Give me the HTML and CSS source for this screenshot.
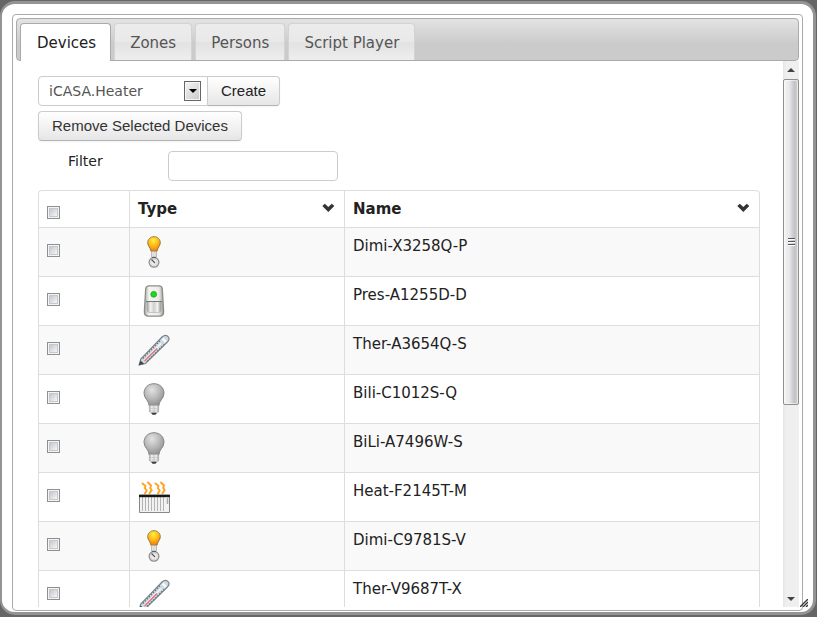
FILE: index.html
```html
<!DOCTYPE html>
<html lang="en">
<head>
<meta charset="utf-8">
<title>Devices</title>
<link rel="stylesheet" href="styles.css">
</head>
<body>
<svg class="defs" width="0" height="0" aria-hidden="true">
  <defs>
    <radialGradient id="glow" cx="45%" cy="25%" r="75%"><stop offset="0" stop-color="#ffec45"/><stop offset=".45" stop-color="#ffc21a"/><stop offset="1" stop-color="#f27a08"/></radialGradient>
    <radialGradient id="dull" cx="40%" cy="28%" r="70%"><stop offset="0" stop-color="#e2e2e2"/><stop offset=".55" stop-color="#b9b9b9"/><stop offset="1" stop-color="#929292"/></radialGradient>
    <linearGradient id="metal"><stop offset="0" stop-color="#a2a2a2"/><stop offset=".25" stop-color="#f2f2f2"/><stop offset=".5" stop-color="#cfcfcf"/><stop offset=".75" stop-color="#f2f2f2"/><stop offset="1" stop-color="#999"/></linearGradient>
    <linearGradient id="shell"><stop offset="0" stop-color="#a9a9a4"/><stop offset=".25" stop-color="#f5f5f1"/><stop offset=".75" stop-color="#ecece8"/><stop offset="1" stop-color="#999994"/></linearGradient>
    <symbol id="dimmer" viewBox="0 0 32 32">
      <path d="M16 .7c-3.700 0-6.300 2.700-6.300 6 0 3.300 2.600 4.500 3.300 8.600h6c.7-4.100 3.300-5.300 3.300-8.600 0-3.300-2.600-6-6.300-6z" fill="url(#glow)" stroke="#8a7440" stroke-width=".9"/>
      <rect x="13.500" y="15.500" width="5" height="5.500" fill="url(#metal)" stroke="#aaa" stroke-width=".5"/>
      <circle cx="16" cy="26.300" r="4.900" fill="#eee" stroke="#8b8b8b" stroke-width="1.200"/>
      <circle cx="16" cy="26.300" r="3.300" fill="none" stroke="#ccc" stroke-width=".7"/>
      <path d="M13.500 23.500l3.500 3.500" stroke="#555" stroke-width="1.100"/>
      <path d="M14 21.700h4" stroke="#555"/>
    </symbol>
    <symbol id="sensor" viewBox="0 0 32 32">
      <path d="M11 .8h10c2 0 3 1 3.300 3L25.600 26c.2 3.500-1 5.200-4 5.200H10.400c-3 0-4.200-1.700-4-5.200L7.700 3.800C8 1.800 9 .8 11 .8z" fill="url(#shell)" stroke="#8d8d88" stroke-width="1.300"/>
      <path d="M9 16.500h14v8c0 2-1 3-3 3h-8c-2 0-3-1-3-3z" fill="url(#metal)" stroke="#aaa" stroke-width=".6"/>
      <path d="M8 16.500h16" stroke="#777"/>
      <circle cx="15.700" cy="9.300" r="2.900" fill="#16dc1c" stroke="#2b8f2c" stroke-width=".7"/>
    </symbol>
    <symbol id="thermometer" viewBox="0 0 32 32">
      <path d="M1.200 31l1.600-6L24.300 2.800c4-3.800 9 1 5.300 5L7.500 29.500z" fill="#cfd9e0" stroke="#78838b" stroke-width="1.200"/>
      <path d="M24.500 4.500l3.500 3.500" stroke="#f5f9fb" stroke-width="2.500"/>
      <path d="M5 24.500L22 6.800M9 27.500L26 10.500" stroke="#6a727a" stroke-width="1.300" stroke-dasharray="1.300 1.600"/>
      <path d="M6.500 26.500L23 9.500" stroke="#f3f5f6" stroke-width="1.600"/>
      <path d="M6.500 27L19 14.500" stroke="#e5666b" stroke-width="1.100"/>
      <path d="M.8 31.200l1.700-4.700 3.700 3.300z" fill="#44484a"/>
    </symbol>
    <symbol id="bulb" viewBox="0 0 32 32">
      <path d="M16 .7C10 .7 6 5 6 10.200c0 5.500 4.700 6.800 5.300 12.800h9.400c.6-6 5.300-7.300 5.300-12.800C26 5 22 .7 16 .7z" fill="url(#dull)" stroke="#868686"/>
      <path d="M11.300 22.500h9.400v6.200l-2 1.300h-5.400l-2-1.300z" fill="url(#metal)" stroke="#aaa" stroke-width=".5"/>
      <path d="M11.500 25.500h9M11.500 28h9" stroke="#bbb" stroke-width=".5"/>
      <path d="M13 29.700h6l-1.500 2.100h-3z" fill="#3d3d3d"/>
    </symbol>
    <symbol id="heater" viewBox="0 0 32 32">
      <g fill="none" stroke="#ffa326" stroke-width="2" stroke-linecap="round" stroke-linejoin="round">
        <path d="M4.500 2.500l3 2.500-.8 2 2 2.500L7 12.500"/><path d="M10 1.500l3 3-.8 2.500 1.500 2.200-2.200 3"/>
        <path d="M17.500 2.500l3 2.500-.8 2 2 2.500-1.700 3"/><path d="M23 1.500l3 3-.8 2.500 1.500 2.200-2.200 3"/>
      </g>
      <path d="M1.500 14h30v17.500h-30z" fill="#f2f2f2" stroke="#888"/>
      <path d="M4.500 16v14M7.500 16v14M10.500 16v14M13.500 16v14M16.500 16v14M19.500 16v14M22.500 16v14M25.500 16v14" stroke="#b4b4b4"/>
      <path d="M29.500 17v6" stroke="#aaa" stroke-width="1.500"/>
      <path d="M1 15h31" stroke="#171717" stroke-width="2.400"/>
    </symbol>
    <symbol id="chevron" viewBox="0 0 14 10"><path d="M.3 3L2.800.7 6.300 4 9.800.7 12.300 3 6.300 8.900z" fill="#333"/></symbol>
  </defs>
</svg>

<main class="window">
  <section class="panel">
    <nav class="tabs">
      <a class="tab active" href="#devices">Devices</a>
      <a class="tab" href="#zones">Zones</a>
      <a class="tab" href="#persons">Persons</a>
      <a class="tab" href="#script">Script Player</a>
    </nav>
    <div class="viewport">
      <div class="content" id="devices">
        <div class="create">
          <div class="picker">
            <select aria-label="Device type"><option>iCASA.Heater</option></select>
            <span class="drop"><svg width="8" height="4" viewBox="0 0 8 4"><path d="M0 0h8L4 4z"/></svg></span>
          </div>
          <button class="btn joined" type="button">Create</button>
        </div>
        <button class="btn" type="button">Remove Selected Devices</button>
        <div class="filter">
          <label for="filter">Filter</label>
          <input id="filter" type="text">
        </div>
        <table>
          <colgroup><col class="c-check"><col class="c-type"><col></colgroup>
          <thead>
            <tr>
              <th><input type="checkbox" aria-label="Select all"></th>
              <th>Type<svg class="sort"><use href="#chevron"/></svg></th>
              <th>Name<svg class="sort"><use href="#chevron"/></svg></th>
            </tr>
          </thead>
          <tbody>
            <tr><td><input type="checkbox" aria-label="Dimi-X3258Q-P"></td><td><svg class="device"><use href="#dimmer"/></svg></td><td>Dimi-X3258Q-P</td></tr>
            <tr><td><input type="checkbox" aria-label="Pres-A1255D-D"></td><td><svg class="device"><use href="#sensor"/></svg></td><td>Pres-A1255D-D</td></tr>
            <tr><td><input type="checkbox" aria-label="Ther-A3654Q-S"></td><td><svg class="device"><use href="#thermometer"/></svg></td><td>Ther-A3654Q-S</td></tr>
            <tr><td><input type="checkbox" aria-label="Bili-C1012S-Q"></td><td><svg class="device"><use href="#bulb"/></svg></td><td>Bili-C1012S-Q</td></tr>
            <tr><td><input type="checkbox" aria-label="BiLi-A7496W-S"></td><td><svg class="device"><use href="#bulb"/></svg></td><td>BiLi-A7496W-S</td></tr>
            <tr><td><input type="checkbox" aria-label="Heat-F2145T-M"></td><td><svg class="device"><use href="#heater"/></svg></td><td>Heat-F2145T-M</td></tr>
            <tr><td><input type="checkbox" aria-label="Dimi-C9781S-V"></td><td><svg class="device"><use href="#dimmer"/></svg></td><td>Dimi-C9781S-V</td></tr>
            <tr><td><input type="checkbox" aria-label="Ther-V9687T-X"></td><td><svg class="device"><use href="#thermometer"/></svg></td><td>Ther-V9687T-X</td></tr>
          </tbody>
        </table>
      </div>
      <div class="scrollbar" aria-hidden="true">
        <svg class="arrow" viewBox="0 0 16 18"><path d="M4 11h8L8 7z" fill="#444"/></svg>
        <div class="track"><div class="thumb"><i></i><i></i><i></i></div></div>
        <svg class="arrow" viewBox="0 0 16 18"><path d="M4 8h8l-4 4z" fill="#444"/></svg>
      </div>
    </div>
  </section>
  <svg class="grip" viewBox="0 0 8 8" aria-hidden="true"><path d="M0 8L8 0M3 8l5-5M6 8l2-2" stroke="#333" stroke-width="1.300"/></svg>
</main>
</body>
</html>
```
FILE: styles.css
```css
* { box-sizing: border-box; }

body {
  margin: 0;
  height: 100vh;
  padding: 1px 1px 2px 0;
  background: #666;
  color: #222;
  font: 14px/20px Verdana, "DejaVu Sans", sans-serif;
}

.defs { position: absolute; }

.window {
  position: relative;
  height: 100%;
  padding: 10px;
  padding-bottom: 1px;
  border: 3px solid #949494;
  border-left-width: 2px;
  border-radius: 15px;
  background: #fff;
}

.panel {
  display: flex;
  flex-direction: column;
  height: 100%;
  padding: 3px;
  border: 1px solid #aaa;
  border-radius: 4px;
}

.tabs {
  display: flex;
  flex: none;
  gap: 3px;
  height: 43px;
  padding: 4px 3px 0;
  border: 1px solid #aaa;
  border-radius: 4px;
  background: linear-gradient(#e3e3e3, #cbcbcb 60%, #cbcbcb);
}

.tab {
  padding: 9px 15px 0;
  border: 1px solid #d3d3d3;
  border-bottom: 0;
  border-radius: 4px 4px 0 0;
  background: linear-gradient(#ececec, #e9e9e9 48%, #e2e2e2 52%, #eee);
  color: #555;
  font-size: 15px;
  text-decoration: none;
}

.tab.active {
  margin-bottom: -1px;
  padding: 9px 14px 0 16px;
  border-color: #aaa;
  background: #fff;
  color: #212121;
}

.viewport {
  display: flex;
  flex: 1;
  min-height: 0;
  overflow: hidden;
  background: #fff;
}

.content {
  flex: 1;
  padding: 15px 23px 0 22px;
}

.create {
  display: flex;
  margin-bottom: 5px;
}

.picker {
  position: relative;
  width: 170px;
}

select {
  width: 100%;
  height: 30px;
  padding: 0 10px;
  border: 1px solid #ccc;
  border-radius: 4px 0 0 4px;
  background: #fff;
  appearance: none;
  color: #555;
  font: inherit;
}

.drop {
  position: absolute;
  top: 5px;
  right: 7px;
  display: grid;
  place-items: center;
  width: 17px;
  height: 20px;
  border: 1px solid #666;
  background: linear-gradient(135deg, #f5f5f5, #c9c9cc);
  box-shadow: inset 0 0 0 1px #f5f5f5;
  pointer-events: none;
}

.btn {
  height: 30px;
  padding: 0 13px;
  border: 1px solid #ccc;
  border-bottom-color: #b3b3b3;
  border-radius: 4px;
  background: linear-gradient(#fff, #e6e6e6);
  box-shadow: 0 1px 2px rgba(0, 0, 0, .05);
  color: #333;
  font: 15px/20px Arial, "Liberation Sans", sans-serif;
}

.joined {
  margin-left: -1px;
  border-radius: 0 4px 4px 0;
  color: #222;
}

.filter {
  display: flex;
  margin: 10px 0 9px 30px;
}

.filter label { width: 100px; }

.filter input {
  width: 170px;
  height: 30px;
  padding: 4px 6px;
  border: 1px solid #ccc;
  border-radius: 4px;
  font: inherit;
}

table {
  width: 100%;
  border: 1px solid #ddd;
  border-top: 0;
  border-left: 0;
  border-radius: 4px;
  border-spacing: 0;
  table-layout: fixed;
  font-size: 15px;
}

.c-check { width: 91px; }
.c-type { width: 215px; }

th, td {
  padding: 8px;
  border-top: 1px solid #ddd;
  border-left: 1px solid #ddd;
  text-align: left;
  vertical-align: top;
}

th:first-child { border-top-left-radius: 4px; }
th:last-child { border-top-right-radius: 4px; }
tbody tr:nth-child(odd) td { background: #f9f9f9; }

input[type="checkbox"] {
  display: block;
  width: 13px;
  height: 13px;
  margin: 8px 0 0;
  border: 1px solid #8e8f8f;
  background: linear-gradient(135deg, #c3c7cd, #f6f6f6) content-box;
  padding: 2px;
  box-shadow: inset 0 0 0 1px #f4f4f4, inset 0 0 0 2px #c5c8cc;
  appearance: none;
}

th input[type="checkbox"] { margin-top: 7px; }

.device {
  display: block;
  width: 32px;
  height: 32px;
}

.sort {
  float: right;
  width: 14px;
  height: 10px;
  margin-top: 4px;
}

.scrollbar {
  display: flex;
  flex: none;
  flex-direction: column;
  width: 16px;
  background: linear-gradient(90deg, #e6e6e6, #efefef 20%, #efefef);
}

.arrow {
  flex: none;
  width: 16px;
  height: 18px;
}

.track { flex: 1; }

.thumb {
  display: flex;
  flex-direction: column;
  align-items: center;
  justify-content: center;
  gap: 1px;
  height: 64%;
  border: 1px solid #8f8f8f;
  border-radius: 2px;
  background: linear-gradient(90deg, #f5f5f5, #e6e6e8 40%, #c2c2c7 75%, #d2d2d2);
  box-shadow: inset 0 0 0 1px rgba(255, 255, 255, .5);
}

.thumb i {
  width: 7px;
  height: 2px;
  border-top: 1px solid #555;
  background: #fff;
}

.grip {
  position: absolute;
  right: 5px;
  bottom: 5px;
  width: 8px;
  height: 8px;
}
```
